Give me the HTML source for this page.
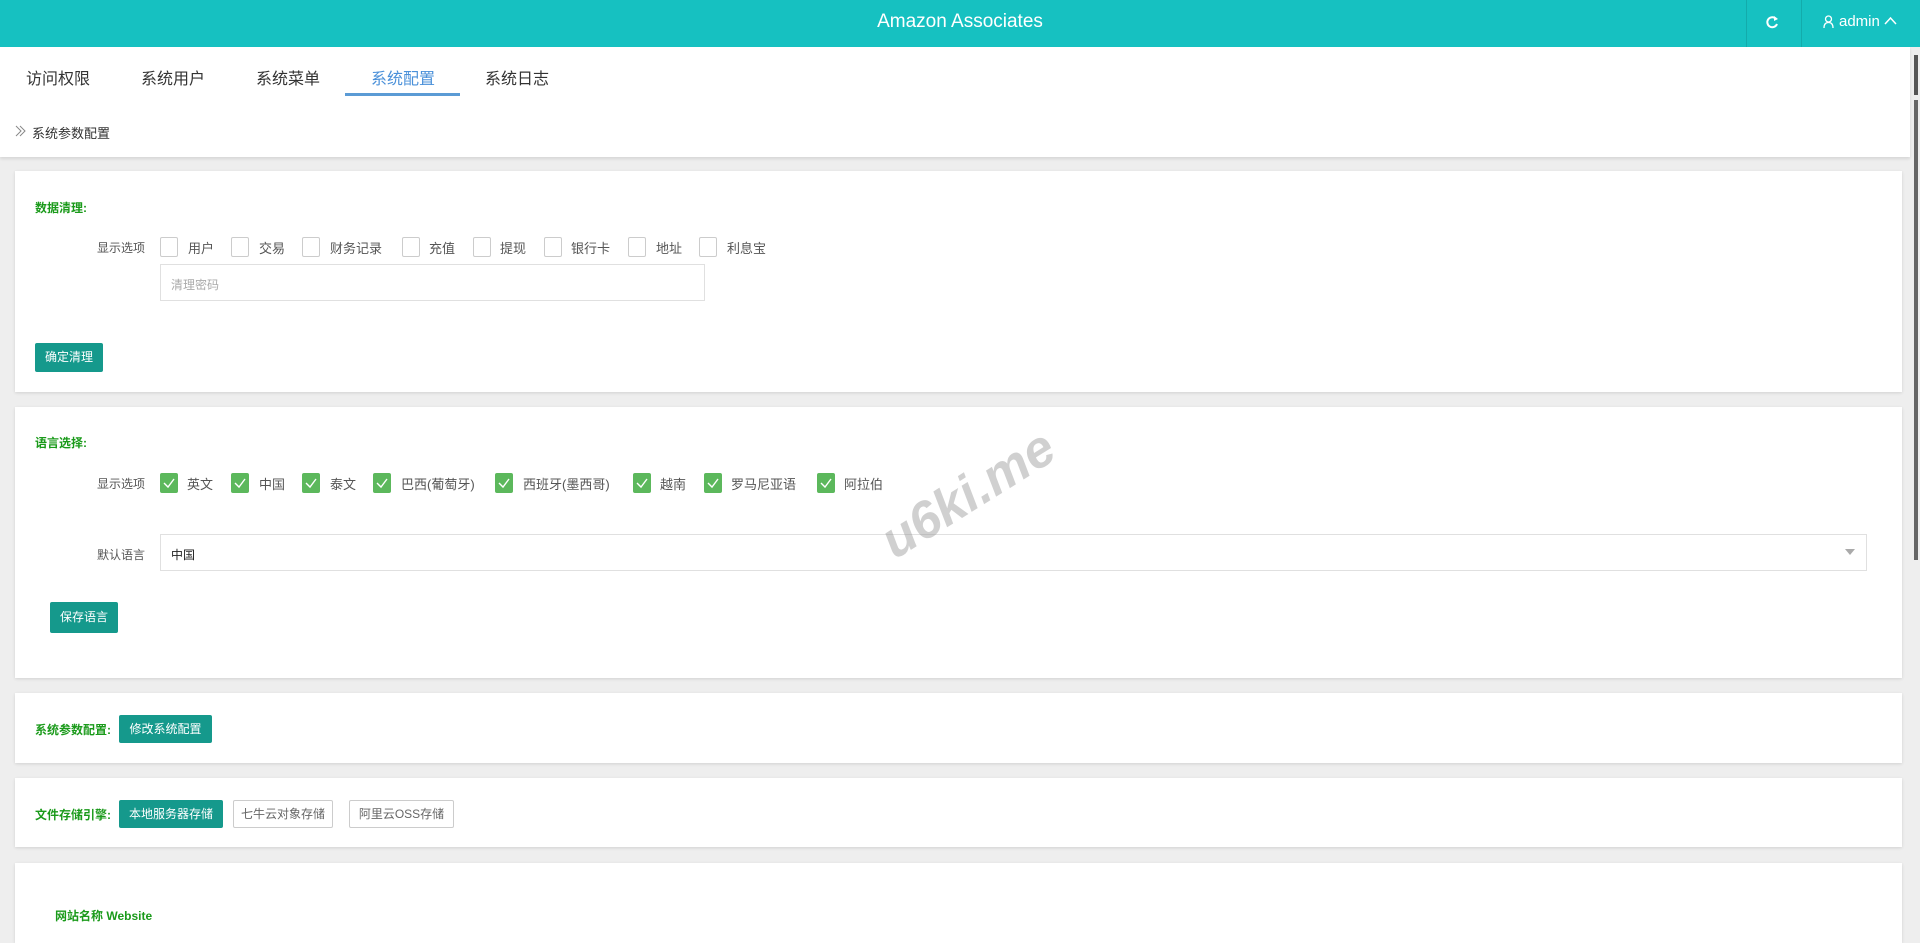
<!DOCTYPE html>
<html><head><meta charset="utf-8"><style>
*{box-sizing:border-box;margin:0;padding:0}
body{width:1920px;height:919px;overflow:hidden;background:#eeeeee;font-family:"Liberation Sans","Noto Sans CJK SC",sans-serif;position:relative;color:#555}
.abs{position:absolute}
.hdr{left:0;top:0;width:1920px;height:47px;background:#16c1c1;color:#fff}
.card{background:#fff;left:15px;width:1887px;box-shadow:0 1px 3px rgba(0,0,0,.12)}
.g{color:#1a9a1a;font-weight:bold;font-size:12px}
.cb{width:18px;height:20px;border:1px solid #ccc;border-radius:2px;background:#fff}
.ck{background:#5cb85c;border-color:#5cb85c}
.t{font-size:13px;color:#555;white-space:nowrap}
.btn{background:#15998c;color:#fff;font-size:12px;text-align:center;border-radius:2px}
.obtn{border:1px solid #ccc;color:#666;font-size:12px;text-align:center;background:#fff;border-radius:2px}
</style></head><body>
<div class="abs hdr">
 <div class="abs" style="left:0;width:1920px;top:11px;text-align:center;font-size:19px">Amazon Associates</div>
 <div class="abs" style="left:1746px;top:0;width:1px;height:47px;background:#13abab"></div>
 <div class="abs" style="left:1801px;top:0;width:1px;height:47px;background:#13abab"></div>
 <svg class="abs" style="left:1766px;top:15px" width="13" height="15" viewBox="0 0 13 15"><path d="M10.5 4.5A5 5 0 1 0 11 9" fill="none" stroke="#fff" stroke-width="2"/><path d="M8 1l4 3-4 2z" fill="#fff"/></svg>
 <svg class="abs" style="left:1823px;top:15px" width="11" height="14" viewBox="0 0 11 14"><circle cx="5.5" cy="4" r="3" fill="none" stroke="#fff" stroke-width="1.3"/><path d="M1 13c0-4 2-5.5 4.5-5.5S10 9 10 13" fill="none" stroke="#fff" stroke-width="1.3"/></svg>
 <div class="abs" style="left:1839px;top:13px;font-size:15px">admin</div>
 <svg class="abs" style="left:1884px;top:16px" width="13" height="9" viewBox="0 0 13 9"><path d="M1 8l5.5-6 5.5 6" fill="none" stroke="#fff" stroke-width="1.5"/></svg>
</div>
<div class="abs" style="left:0;top:47px;width:1910px;height:110px;background:#fff;box-shadow:0 2px 3px rgba(0,0,0,.1)"></div>
<div class="abs t" style="left:26px;top:65px;font-size:16px;color:#333">访问权限</div>
<div class="abs t" style="left:141px;top:65px;font-size:16px;color:#333">系统用户</div>
<div class="abs t" style="left:256px;top:65px;font-size:16px;color:#333">系统菜单</div>
<div class="abs t" style="left:371px;top:65px;font-size:16px;color:#4a90d9">系统配置</div>
<div class="abs t" style="left:485px;top:65px;font-size:16px;color:#333">系统日志</div>
<div class="abs" style="left:345px;top:93px;width:115px;height:3px;background:#5b9bd5"></div>
<svg class="abs" style="left:15px;top:125px" width="12" height="12" viewBox="0 0 12 12"><path d="M1 1l5 5-5 5M5 1l5 5-5 5" fill="none" stroke="#888" stroke-width="1"/></svg>
<div class="abs t" style="left:32px;top:123px;font-size:13px;color:#333">系统参数配置</div>
<div class="abs" style="left:1914px;top:55px;width:4px;height:40px;background:#555"></div>
<div class="abs" style="left:1914px;top:100px;width:4px;height:460px;background:#666"></div>

<div class="abs card" style="top:171px;height:221px"></div>
<div class="abs g" style="left:35px;top:199px">数据清理:</div>
<div class="abs t" style="left:97px;top:239px;font-size:12px">显示选项</div>
<div class="abs cb" style="left:160px;top:237px"></div><div class="abs t" style="left:188px;top:238px">用户</div>
<div class="abs cb" style="left:231px;top:237px"></div><div class="abs t" style="left:259px;top:238px">交易</div>
<div class="abs cb" style="left:302px;top:237px"></div><div class="abs t" style="left:330px;top:238px">财务记录</div>
<div class="abs cb" style="left:402px;top:237px"></div><div class="abs t" style="left:429px;top:238px">充值</div>
<div class="abs cb" style="left:473px;top:237px"></div><div class="abs t" style="left:500px;top:238px">提现</div>
<div class="abs cb" style="left:544px;top:237px"></div><div class="abs t" style="left:571px;top:238px">银行卡</div>
<div class="abs cb" style="left:628px;top:237px"></div><div class="abs t" style="left:656px;top:238px">地址</div>
<div class="abs cb" style="left:699px;top:237px"></div><div class="abs t" style="left:727px;top:238px">利息宝</div>
<div class="abs" style="left:160px;top:264px;width:545px;height:37px;border:1px solid #e0e0e0"></div>
<div class="abs t" style="left:171px;top:276px;font-size:12px;color:#aaa">清理密码</div>
<div class="abs btn" style="left:35px;top:343px;width:68px;height:29px;line-height:29px">确定清理</div>

<div class="abs card" style="top:407px;height:271px"></div>
<div class="abs g" style="left:35px;top:434px">语言选择:</div>
<div class="abs t" style="left:97px;top:475px;font-size:12px">显示选项</div>
<div class="abs cb ck" style="left:160px;top:473px"></div><div class="abs t" style="left:187px;top:474px">英文</div>
<div class="abs cb ck" style="left:231px;top:473px"></div><div class="abs t" style="left:259px;top:474px">中国</div>
<div class="abs cb ck" style="left:302px;top:473px"></div><div class="abs t" style="left:330px;top:474px">泰文</div>
<div class="abs cb ck" style="left:373px;top:473px"></div><div class="abs t" style="left:401px;top:474px">巴西(葡萄牙)</div>
<div class="abs cb ck" style="left:495px;top:473px"></div><div class="abs t" style="left:523px;top:474px">西班牙(墨西哥)</div>
<div class="abs cb ck" style="left:633px;top:473px"></div><div class="abs t" style="left:660px;top:474px">越南</div>
<div class="abs cb ck" style="left:704px;top:473px"></div><div class="abs t" style="left:731px;top:474px">罗马尼亚语</div>
<div class="abs cb ck" style="left:817px;top:473px"></div><div class="abs t" style="left:844px;top:474px">阿拉伯</div>
<svg class="abs" style="left:0;top:0;pointer-events:none" width="900" height="500"><g fill="none" stroke="#fff" stroke-width="1.4"><path d="M164 483l4 4 6-8"/><path d="M235 483l4 4 6-8"/><path d="M306 483l4 4 6-8"/><path d="M377 483l4 4 6-8"/><path d="M499 483l4 4 6-8"/><path d="M637 483l4 4 6-8"/><path d="M708 483l4 4 6-8"/><path d="M821 483l4 4 6-8"/></g></svg>
<div class="abs t" style="left:97px;top:546px;font-size:12px">默认语言</div>
<div class="abs" style="left:160px;top:534px;width:1707px;height:37px;border:1px solid #e0e0e0"></div>
<div class="abs t" style="left:171px;top:546px;font-size:12px;color:#222">中国</div>
<svg class="abs" style="left:1845px;top:549px" width="10" height="6"><path d="M0 0h10L5 6z" fill="#aaa"/></svg>
<div class="abs btn" style="left:50px;top:602px;width:68px;height:31px;line-height:31px">保存语言</div>

<div class="abs card" style="top:693px;height:70px"></div>
<div class="abs g" style="left:35px;top:721px">系统参数配置:</div>
<div class="abs btn" style="left:119px;top:715px;width:93px;height:28px;line-height:28px">修改系统配置</div>

<div class="abs card" style="top:778px;height:69px"></div>
<div class="abs g" style="left:35px;top:806px">文件存储引擎:</div>
<div class="abs btn" style="left:119px;top:800px;width:104px;height:28px;line-height:28px">本地服务器存储</div>
<div class="abs obtn" style="left:233px;top:800px;width:100px;height:28px;line-height:26px">七牛云对象存储</div>
<div class="abs obtn" style="left:349px;top:800px;width:105px;height:28px;line-height:26px">阿里云OSS存储</div>

<div class="abs card" style="top:863px;height:80px"></div>
<div class="abs g" style="left:55px;top:907px">网站名称 Website</div>

<div class="abs" style="left:870px;font-size:52px;font-weight:bold;font-style:italic;color:rgba(150,150,150,.45);transform:rotate(-32deg);transform-origin:left top;white-space:nowrap;top:520px">u6ki.me</div>
</body></html>
